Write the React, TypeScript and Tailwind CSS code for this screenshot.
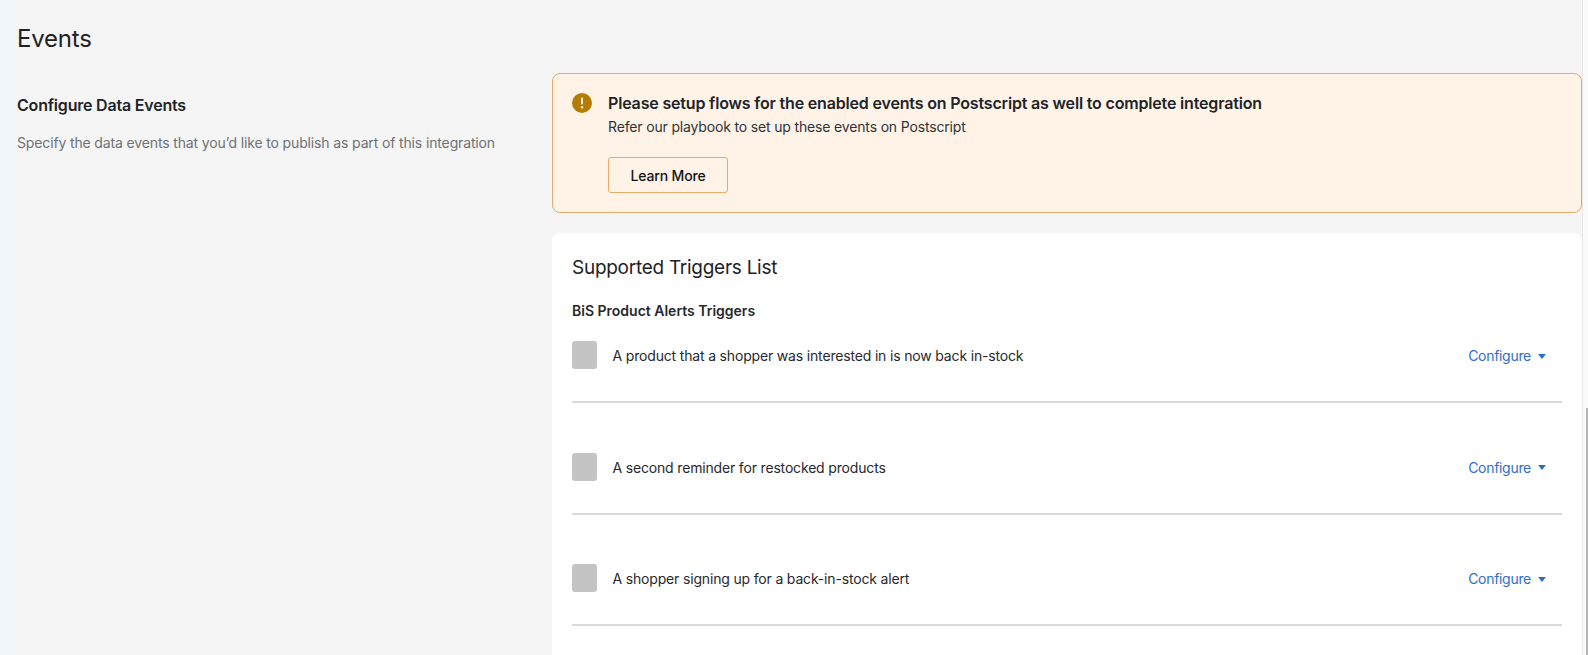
const triggers = [
  'A product that a shopper was interested in is now back in-stock',
  'A second reminder for restocked products',
  'A shopper signing up for a back-in-stock alert',
];

function TriggerRow({ label }: { label: string }) {
  return (
    <div className="mb-[49.5px] flex h-[62px] items-start border-b-2 border-[#d9d9d9]">
      <div className="h-[28px] w-[25px] rounded-[3px] bg-[#c4c4c4]" />
      <span className="ml-[15.5px] mt-[6px] flex-1 text-[14px] leading-[18px] tracking-[-0.17px] text-[#26292d]">{label}</span>
      <button className="mr-[16px] mt-[6px] flex items-center text-[14px] leading-[18px] tracking-[-0.3px] text-[#2c6ecb]">
        Configure
        <span className="ml-[7px] h-0 w-0 border-x-[4px] border-t-[5px] border-x-transparent border-t-[#2c6ecb]" />
      </button>
    </div>
  );
}

export default function App() {
  return (
    <div className="flex h-screen overflow-hidden bg-[#f5f5f5] font-['Inter',sans-serif] antialiased">
      <div className="w-[16px] shrink-0 bg-[#f1f6fa]" />

      <main className="flex min-w-0 flex-1 flex-col">
        <h1 className="ml-px mt-[24px] text-[24px] font-normal leading-[30px] tracking-[-0.2px] text-[#1f2225]">Events</h1>

        <div className="mt-[19px] flex flex-1">
          {/* Left description */}
          <section className="w-[536px] shrink-0 pl-px pt-[22px]">
            <h2 className="text-[16px] font-semibold leading-[20px] tracking-[-0.2px] text-[#202327]">Configure Data Events</h2>
            <p className="mt-[18px] text-[14px] leading-[20px] tracking-[-0.14px] text-[#6d7175]">
              Specify the data events that you’d like to publish as part of this integration
            </p>
          </section>

          {/* Right column */}
          <section className="flex min-w-0 flex-1 flex-col">
            <div className="h-[140px] rounded-[8px] border border-[#e0ac68] bg-[#fff3e8] pl-[19px] pt-[19px]">
              <div className="flex">
                <svg viewBox="0 0 20 20" className="h-[20px] w-[20px] shrink-0">
                  <circle cx="10" cy="10" r="10" fill="#b57c03" />
                  <rect x="9" y="4.5" width="2" height="7" rx="1" fill="#fff3e8" />
                  <circle cx="10" cy="14.3" r="1.2" fill="#fff3e8" />
                </svg>
                <div className="ml-[16px]">
                  <p className="text-[16px] font-semibold leading-[20px] tracking-[-0.17px] text-[#202327]">
                    Please setup flows for the enabled events on Postscript as well to complete integration
                  </p>
                  <p className="mt-[5px] text-[14px] leading-[18px] tracking-[-0.16px] text-[#303236]">
                    Refer our playbook to set up these events on Postscript
                  </p>
                  <button className="mt-[21px] h-[36px] w-[120px] rounded-[3px] border border-[#e0ac68] text-[14px] font-medium tracking-[-0.16px] text-[#111213]">
                    Learn More
                  </button>
                </div>
              </div>
            </div>

            <div className="mt-[20px] flex-1 rounded-t-[8px] bg-white pl-[20px] pr-[20px] pt-[22px]">
              <h3 className="text-[19px] font-normal leading-[26px] tracking-[-0.27px] text-[#1f2225]">Supported Triggers List</h3>
              <h4 className="mt-[21px] text-[14px] font-semibold leading-[18px] text-[#26292d]">BiS Product Alerts Triggers</h4>
              <div className="mt-[21px]">
                {triggers.map((label) => (
                  <TriggerRow key={label} label={label} />
                ))}
              </div>
            </div>
          </section>
        </div>
      </main>

      {/* Scrollbar */}
      <div className="flex w-[6px] shrink-0 flex-col items-end border-l border-[#e8e8e8] bg-[#fafafa] pt-[408px]">
        <div className="w-[2px] flex-1 bg-[#b5b5b5]" />
      </div>
    </div>
  );
}
